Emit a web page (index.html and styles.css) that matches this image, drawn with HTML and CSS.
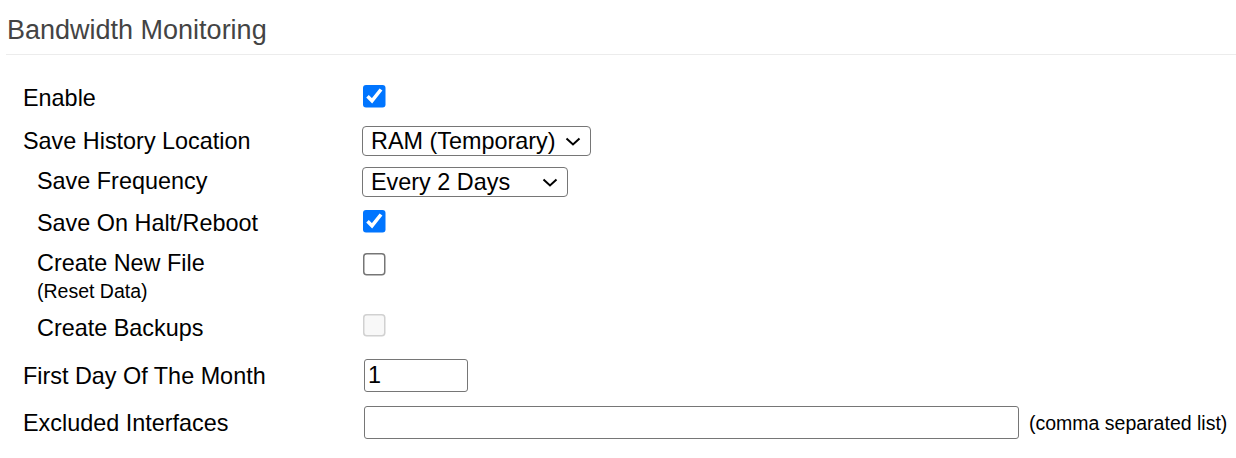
FILE: index.html
```html
<!DOCTYPE html>
<html>
<head>
<meta charset="utf-8">
<title>Bandwidth Monitoring</title>
<link rel="stylesheet" href="styles.css">
</head>
<body>
<div class="section">
  <div class="section-head">
    <h2 class="section-title">Bandwidth Monitoring</h2>
  </div>
  <div class="form">
    <div class="row">
      <div class="label label--check">Enable</div>
      <div class="ctl ctl--check"><input type="checkbox" class="cb" checked></div>
    </div>
    <div class="row row--gap-a">
      <div class="label label--sel">Save History Location</div>
      <div class="ctl">
        <div class="select-wrap">
          <select class="select select--loc"><option>RAM (Temporary)</option><option>JFFS</option><option>Custom</option></select>
          <svg class="chev" width="16" height="9" viewBox="0 0 16 9"><path d="M1.5 1.5 L8 7.5 L14.5 1.5" fill="none" stroke="#000" stroke-width="2"/></svg>
        </div>
      </div>
    </div>
    <div class="row row--gap-b">
      <div class="label label--sub label--sel">Save Frequency</div>
      <div class="ctl">
        <div class="select-wrap">
          <select class="select select--freq"><option>Every 2 Days</option><option>Every Hour</option><option>Every Day</option></select>
          <svg class="chev" width="16" height="9" viewBox="0 0 16 9"><path d="M1.5 1.5 L8 7.5 L14.5 1.5" fill="none" stroke="#000" stroke-width="2"/></svg>
        </div>
      </div>
    </div>
    <div class="row row--gap-c">
      <div class="label label--sub">Save On Halt/Reboot</div>
      <div class="ctl ctl--check"><input type="checkbox" class="cb" checked></div>
    </div>
    <div class="row row--gap-d">
      <div class="label label--sub label--check">Create New File<div class="label-note">(Reset Data)</div></div>
      <div class="ctl ctl--check ctl--low"><input type="checkbox" class="cb"></div>
    </div>
    <div class="row row--gap-e">
      <div class="label label--sub label--low">Create Backups</div>
      <div class="ctl ctl--mid"><input type="checkbox" class="cb" disabled></div>
    </div>
    <div class="row row--gap-f">
      <div class="label label--inp">First Day Of The Month</div>
      <div class="ctl ctl--inp"><input type="text" class="text text--day" value="1"></div>
    </div>
    <div class="row row--gap-g">
      <div class="label label--inp">Excluded Interfaces</div>
      <div class="ctl ctl--inp ctl--line">
        <input type="text" class="text text--ifaces" value="">
        <span class="hint">(comma separated list)</span>
      </div>
    </div>
  </div>
</div>
</body>
</html>
```

FILE: styles.css
```css
html, body {
  margin: 0;
  padding: 0;
  background: #fff;
}

body {
  font-family: "Liberation Sans", Arial, sans-serif;
  color: #000;
  width: 1236px;
  height: 458px;
  overflow: hidden;
}

.section-head {
  margin-left: 6px;
  padding-top: 15px;
  padding-bottom: 9px;
  border-bottom: 1px solid #ececec;
}

.section-title {
  margin: 0 0 0 1px;
  font-size: 27px;
  line-height: 30px;
  font-weight: normal;
  color: #444;
}

.form {
  padding-top: 29.4px;
  padding-left: 23px;
  display: flex;
  flex-direction: column;
}

.row {
  display: flex;
  align-items: flex-start;
}

.row--gap-a { margin-top: 14.6px; }
.row--gap-b { margin-top: 10.6px; }
.row--gap-c { margin-top: 13px; }
.row--gap-d { margin-top: 12px; }
.row--gap-e { margin-top: 11px; }
.row--gap-f { margin-top: 19.6px; }
.row--gap-g { margin-top: 14px; }

.label {
  width: 339px;
  flex: none;
  font-size: 23.4px;
  line-height: 27px;
}

.label--sub { padding-left: 14px; width: 325px; }
.label--check { padding-top: 1px; margin-bottom: -1px; }
.label--sel { padding-top: 1.6px; }
.label--low { padding-top: 2px; margin-bottom: -2px; }
.label--inp { padding-top: 4px; }

.label-note {
  font-size: 19.5px;
  line-height: 22.4px;
  margin-top: 3.6px;
}

.ctl {
  display: flex;
  align-items: center;
}

.ctl--check { padding-top: 0.6px; }
.ctl--low { padding-top: 4.6px; }
.ctl--mid { padding-top: 1.6px; }

.cb {
  zoom: 1.5;
  width: 15.333px;
  height: 15.333px;
  margin: 0 0 0 0.667px;
}

.select-wrap {
  position: relative;
  display: inline-block;
}

.select {
  -webkit-appearance: none;
  appearance: none;
  box-sizing: border-box;
  height: 30px;
  border: 1px solid #767676;
  border-radius: 4px;
  background: #fff;
  color: #000;
  font-family: "Liberation Sans", Arial, sans-serif;
  font-size: 23.4px;
  padding: 0 0 0 8px;
  margin: 0;
  display: block;
}

.select--loc { width: 229px; }
.select--freq { width: 206px; }

.chev {
  position: absolute;
  right: 10px;
  top: 11px;
  pointer-events: none;
}

.text {
  box-sizing: border-box;
  height: 33px;
  border: 1px solid #767676;
  border-radius: 3px;
  padding: 0 3px;
  margin: 0 0 0 2px;
  font-family: "Liberation Sans", Arial, sans-serif;
  font-size: 23.4px;
  color: #000;
  background: #fff;
}

.text--day { width: 104px; }
.text--ifaces { width: 655px; }

.hint {
  font-size: 19.5px;
  line-height: 22px;
  margin-left: 10px;
}
```
